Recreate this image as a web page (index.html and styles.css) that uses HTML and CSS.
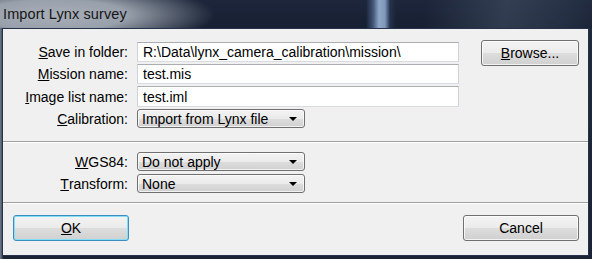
FILE: index.html
```html
<!DOCTYPE html>
<html lang="en">
<head>
    <meta charset="UTF-8">
    <title>Import Lynx survey</title>
    <link rel="stylesheet" href="styles.css">
</head>
<body>

    <!-- Dialog window -->
    <div class="window">
        <div class="title-bar">
            <span class="title">Import Lynx survey</span>
        </div>

        <div class="client">
            <!-- Output location and calibration -->
            <div class="top-section">
                <div class="fields">
                    <label class="field-label"><u>S</u>ave in folder:</label>
                    <input class="text-box" type="text" value="R:\Data\lynx_camera_calibration\mission\">

                    <label class="field-label"><u>M</u>ission name:</label>
                    <input class="text-box" type="text" value="test.mis">

                    <label class="field-label"><u>I</u>mage list name:</label>
                    <input class="text-box" type="text" value="test.iml">

                    <label class="field-label"><u>C</u>alibration:</label>
                    <div class="combo">
                        <span class="combo-text">Import from Lynx file</span>
                        <span class="combo-arrow"></span>
                    </div>
                </div>
                <button class="btn browse-btn"><u>B</u>rowse...</button>
            </div>

            <div class="separator"></div>

            <!-- Coordinate options -->
            <div class="fields coord-fields">
                <label class="field-label"><u>W</u>GS84:</label>
                <div class="combo">
                    <span class="combo-text">Do not apply</span>
                    <span class="combo-arrow"></span>
                </div>

                <label class="field-label"><u>T</u>ransform:</label>
                <div class="combo">
                    <span class="combo-text">None</span>
                    <span class="combo-arrow"></span>
                </div>
            </div>

            <div class="separator"></div>

            <!-- Dialog buttons -->
            <div class="button-row">
                <button class="btn dialog-btn default-btn"><u>O</u>K</button>
                <button class="btn dialog-btn">Cancel</button>
            </div>
        </div>
    </div>

</body>
</html>
```

FILE: styles.css
```css
/* Reset */
* {
    margin: 0;
    padding: 0;
    box-sizing: border-box;
}

body {
    width: 592px;
    height: 259px;
    overflow: hidden;
    background-color: #1b2436;
    font-family: "Liberation Sans", Arial, sans-serif;
}

/* Window frame */
.window {
    width: 592px;
    height: 259px;
    display: flex;
    flex-direction: column;
    padding: 0 3px 3px 2px;
    background:
        linear-gradient(90deg, #6f7a8a 0px, #4a5466 2px, rgba(0, 0, 0, 0) 3px),
        linear-gradient(180deg, #1f2a3d 0%, #1a2335 100%);
}

/* Aero style title bar */
.title-bar {
    height: 28px;
    margin: 0 -3px 0 -2px;
    padding-left: 3px;
    display: flex;
    align-items: center;
    background:
        radial-gradient(ellipse 160px 34px at 55px 15px, #a8aeb8 0%, #98a0ab 45%, rgba(40, 50, 70, 0) 100%),
        linear-gradient(90deg, rgba(0, 0, 0, 0) 366px, #3f5578 373px, #8fa6c6 379px, #7e97bb 385px, #24324b 390px, rgba(0, 0, 0, 0) 396px),
        linear-gradient(100deg, rgba(0, 0, 0, 0) 420px, rgba(80, 92, 112, 0.45) 500px, rgba(60, 72, 92, 0.35) 560px, rgba(0, 0, 0, 0) 600px),
        linear-gradient(180deg, #1d263a 0%, #172033 100%);
}

.title {
    font-size: 14.5px;
    color: #161616;
    letter-spacing: 0.1px;
}

/* Client area */
.client {
    flex-grow: 1;
    display: flex;
    flex-direction: column;
    background-color: #f0f0f0;
    border: 1px solid #26314a;
}

.top-section {
    display: flex;
    align-items: flex-start;
    padding: 11px 0 13px 0;
}

/* Label / control grid */
.fields {
    display: grid;
    grid-template-columns: 125px 322px;
    grid-template-rows: 20px 20px 21px 19px;
    column-gap: 9px;
    row-gap: 2px;
    margin-top: 2px;
}

.coord-fields {
    grid-template-columns: 125px 168px;
    grid-template-rows: 19px 19px;
    row-gap: 3px;
    margin-top: 0;
    padding: 9px 0 9px 0;
}

.field-label {
    font-size: 14px;
    color: #000;
    text-align: right;
    display: flex;
    align-items: center;
    justify-content: flex-end;
}

.text-box {
    width: 322px;
    height: 100%;
    padding-left: 5px;
    font-family: "Liberation Sans", Arial, sans-serif;
    font-size: 14px;
    color: #000;
    background-color: #fff;
    border: 1px solid;
    border-color: #abadb3 #cfd2d8 #d9dde3 #cfd2d8;
    outline: none;
}

/* Combo boxes */
.combo {
    width: 168px;
    height: 100%;
    display: flex;
    align-items: center;
    padding: 0 7px 0 4px;
    font-size: 14px;
    color: #000;
    border: 1px solid #707070;
    border-radius: 3px;
    background: linear-gradient(180deg, #f3f3f3 0%, #ebebeb 50%, #dddddd 51%, #d0d0d0 100%);
    box-shadow: inset 0 0 0 1px rgba(255, 255, 255, 0.7);
}

.combo-text {
    flex-grow: 1;
}

.combo-arrow {
    width: 0;
    height: 0;
    border-left: 4px solid transparent;
    border-right: 4px solid transparent;
    border-top: 4px solid #000;
}

/* Separator lines */
.separator {
    height: 2px;
    border-top: 1px solid #a0a0a0;
    border-bottom: 1px solid #fff;
}

/* Buttons */
.btn {
    font-family: "Liberation Sans", Arial, sans-serif;
    font-size: 14px;
    color: #000;
    border: 1px solid #707070;
    border-radius: 3px;
    background: linear-gradient(180deg, #f3f3f3 0%, #ebebeb 50%, #dddddd 51%, #d0d0d0 100%);
    box-shadow: inset 0 0 0 1px rgba(255, 255, 255, 0.75);
    cursor: pointer;
}

.browse-btn {
    width: 98px;
    height: 26px;
    margin-left: 22px;
}

.button-row {
    display: flex;
    justify-content: space-between;
    padding: 11px 9px 0 10px;
}

.dialog-btn {
    width: 116px;
    height: 26px;
}

.default-btn {
    border-color: #3a8fc0;
    box-shadow: inset 0 0 0 1px #86def6;
}
```
